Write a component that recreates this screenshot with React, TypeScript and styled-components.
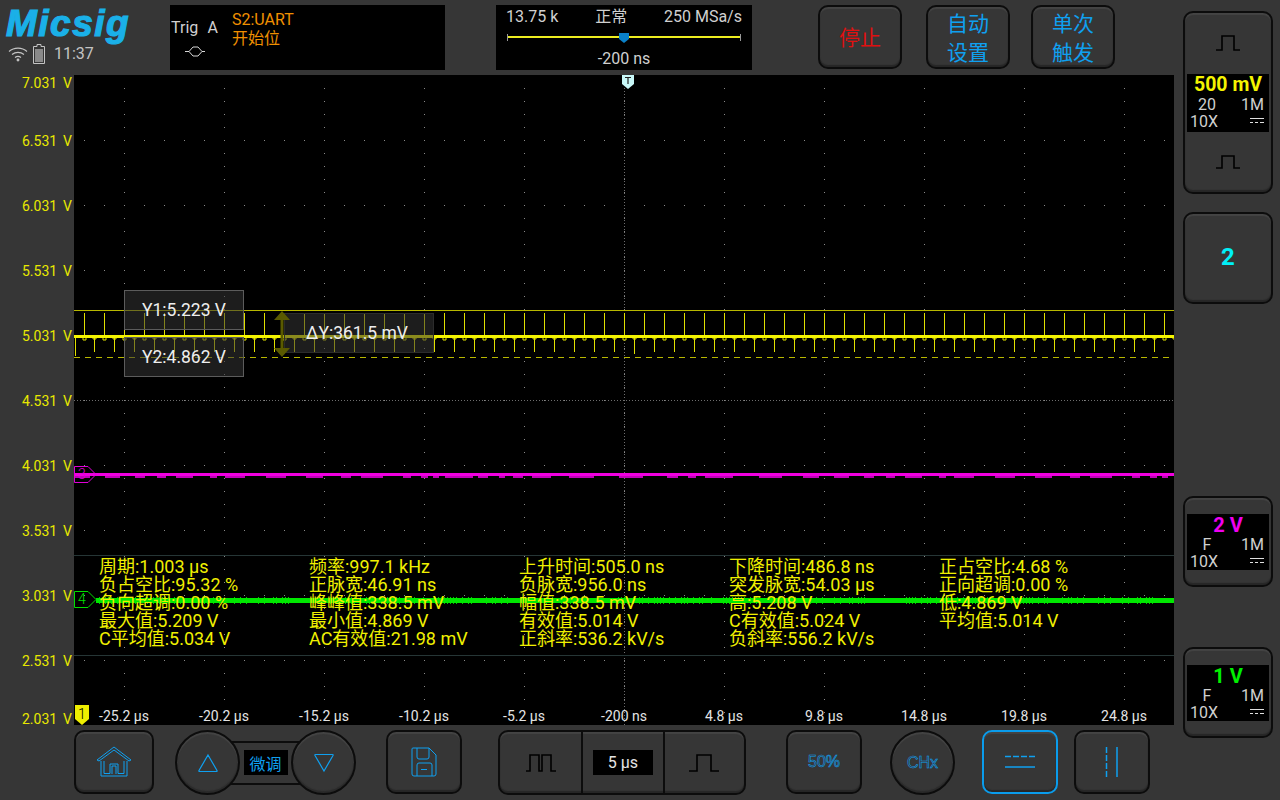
import styled, { createGlobalStyle } from 'styled-components';

const GlobalStyle = createGlobalStyle`
  html, body { margin: 0; padding: 0; background: #363636; }
  body { font-family: Roboto, "Noto Sans CJK SC", sans-serif; overflow: hidden; }
  * { box-sizing: border-box; }
`;

const YELLOW = '#f0f000';
const BLUE = '#0fa0f0';
const DARK = '#0c0c0c';

const voltages = ['7.031', '6.531', '6.031', '5.531', '5.031', '4.531', '4.031', '3.531', '3.031', '2.531', '2.031'];
const times = ['-25.2 µs', '-20.2 µs', '-15.2 µs', '-10.2 µs', '-5.2 µs', '-200 ns', '4.8 µs', '9.8 µs', '14.8 µs', '19.8 µs', '24.8 µs'];
const measures = [
  '周期:1.003 µs', '频率:997.1 kHz', '上升时间:505.0 ns', '下降时间:486.8 ns', '正占空比:4.68 %',
  '负占空比:95.32 %', '正脉宽:46.91 ns', '负脉宽:956.0 ns', '突发脉宽:54.03 µs', '正向超调:0.00 %',
  '负向超调:0.00 %', '峰峰值:338.5 mV', '幅值:338.5 mV', '高:5.208 V', '低:4.869 V',
  '最大值:5.209 V', '最小值:4.869 V', '有效值:5.014 V', 'C有效值:5.024 V', '平均值:5.014 V',
  'C平均值:5.034 V', 'AC有效值:21.98 mV', '正斜率:536.2 kV/s', '负斜率:556.2 kV/s',
];

const range = (n: number) => Array.from({ length: n }, (_, i) => i);

// dots of the graticule, in plot coordinates
const gridPath = () => {
  let d = '';
  range(11).forEach((c) => {
    range(50).forEach((r) => {
      d += `M${50 + c * 100} ${13 + r * 13}h1v1h-1z`;
    });
  });
  range(9).forEach((r) => {
    range(55).forEach((c) => {
      d += `M${10 + c * 20} ${65 + r * 65}h1v1h-1z`;
    });
  });
  return d;
};

const spikesPath = () => {
  let d = '';
  range(55).forEach((i) => {
    const x = 10 + i * 20;
    d += `M${x}.5 261V238`;
    d += `M${x + 10}.5 261V${i === 27 ? 279 : 277}`;
    d += `M${x + 9} 262h3v2h-3z`;
    d += `M${x - 1} 262h3v3h-3z`;
  });
  return d + 'M1.5 261V281';
};

const burstPath = (y: number, seed: number, height: number) => {
  let d = '';
  let x = 0;
  let i = seed;
  while (x < 1100) {
    i = (i * 37 + 11) % 101;
    const w = 6 + (i % 24);
    const gap = 4 + (i % 23);
    d += `M${x} ${y}h${w}v${height}h-${w}z`;
    x += w + gap;
  }
  return d;
};

const noisePath = () => {
  let d = '';
  let i = 7;
  for (let x = 22; x < 1100; x += 3) {
    i = (i * 29 + 13) % 97;
    d += `M${x}.5 ${523 - (i % 2)}V${528 + (i % 2)}`;
  }
  return d;
};

const Screen = styled.div`
  width: 1280px;
  height: 800px;
  display: flex;
  background: #363636;
  overflow: hidden;
`;

const MainColumn = styled.div`
  width: 1174px;
  display: flex;
  flex-direction: column;
`;

const TopBar = styled.header`
  height: 75px;
  padding-top: 5px;
  display: flex;
  align-items: flex-start;
`;

const Brand = styled.div`
  width: 170px;
  flex: none;
`;

const Logo = styled.div`
  font: italic 900 37px/38px "Liberation Sans", sans-serif;
  -webkit-text-stroke: 1.2px #1ab0e8;
  letter-spacing: 1.5px;
  color: #1ab0e8;
  padding-left: 6px;
  height: 36px;
`;

const Status = styled.div`
  display: flex;
  align-items: center;
  gap: 5px;
  padding: 3px 0 0 8px;
  color: #c4c4c4;
  font-size: 16px;
  line-height: 20px;
`;

const Clock = styled.span`
  margin-left: 4px;
`;

const TrigPanel = styled.section`
  width: 275px;
  height: 65px;
  background: #000;
  display: flex;
  flex: none;
`;

const TrigSource = styled.div`
  width: 62px;
  color: #d0d0d0;
  font-size: 16px;
  line-height: 18px;
  padding: 14px 0 0 1px;
`;

const TrigLabels = styled.div`
  display: flex;
  justify-content: space-between;
  padding-right: 14px;
`;

const TrigGlyph = styled.svg`
  display: block;
  margin: 9px 0 0 14px;
`;

const TrigInfo = styled.div`
  color: #f09000;
  font-size: 16px;
  line-height: 19px;
  padding-top: 5px;
`;

const TimePanel = styled.section`
  width: 256px;
  height: 65px;
  margin: 0 66px 0 51px;
  background: #000;
  color: #d0d0d0;
  font-size: 16px;
  flex: none;
  display: flex;
  flex-direction: column;
  align-items: stretch;
`;

const TimeRow = styled.div`
  display: flex;
  justify-content: space-between;
  padding: 3px 10px 0;
  line-height: 18px;
`;

const TimeTrack = styled.div`
  position: relative;
  height: 7px;
  margin: 8px 11px 0;
  border-left: 1px solid #999;
  border-right: 1px solid #999;
  &::before {
    content: '';
    position: absolute;
    left: 0;
    right: 0;
    top: 2px;
    height: 2px;
    background: #ecec20;
  }
`;

const TimeThumb = styled.svg`
  position: absolute;
  left: 111px;
  top: -1px;
`;

const TimeOffset = styled.div`
  text-align: center;
  margin-top: 9px;
  line-height: 18px;
`;

const Key = styled.button<{ $w: number; $h?: number; $ml?: number; $color?: string; $active?: boolean; $pt?: number }>`
  width: ${(p) => p.$w}px;
  height: ${(p) => p.$h ?? 64}px;
  margin-left: ${(p) => p.$ml ?? 0}px;
  flex: none;
  padding: ${(p) => p.$pt ?? 0}px 0 0;
  display: flex;
  flex-direction: column;
  align-items: center;
  justify-content: center;
  background: #363636;
  border: 2px solid ${(p) => (p.$active ? '#0a9cec' : DARK)};
  border-radius: 10px;
  box-shadow: inset 0 -2px 1px #262626, inset 0 2px 1px #444;
  color: ${(p) => p.$color ?? BLUE};
  font: 21px/29px Roboto, "Noto Sans CJK SC", sans-serif;
`;

const Middle = styled.div`
  height: 650px;
  display: flex;
`;

const Axis = styled.div`
  width: 74px;
  flex: none;
`;

const AxisLabel = styled.div`
  height: 65px;
  display: flex;
  align-items: center;
  justify-content: space-between;
  padding: 0 2px 0 22px;
  color: #e8e800;
  font-size: 14px;
  &:first-child {
    height: 33px;
    align-items: flex-start;
  }
  &:last-child {
    height: 34px;
    align-items: flex-end;
  }
`;

const Plot = styled.main`
  position: relative;
  width: 1100px;
  height: 650px;
  background: #000;
  overflow: hidden;
`;

const Trace = styled.svg`
  display: block;
`;

const Readout = styled.div<{ $x: number; $y: number; $w: number }>`
  position: absolute;
  left: ${(p) => p.$x}px;
  top: ${(p) => p.$y}px;
  width: ${(p) => p.$w}px;
  height: 40px;
  display: flex;
  align-items: center;
  justify-content: center;
  background: rgba(52, 52, 52, 0.55);
  border: 1px solid #5c5c5c;
  color: #eee;
  font-size: 17.5px;
`;

const DeltaReadout = styled(Readout)`
  border-color: #2c2c2c;
  padding-right: 4px;
`;

const DeltaArrow = styled.svg`
  position: absolute;
  left: 200px;
  top: 235px;
`;

const MeasureTable = styled.div`
  position: absolute;
  left: 0;
  right: 0;
  top: 480px;
  height: 101px;
  padding: 2px 0 0 25px;
  border-top: 1px solid #263636;
  border-bottom: 1px solid #263636;
  display: grid;
  grid-template-columns: repeat(5, 210px);
  grid-auto-rows: 18px;
  color: ${YELLOW};
  font-size: 18px;
  line-height: 18px;
  white-space: nowrap;
`;

const TimeScale = styled.div`
  position: absolute;
  left: 0;
  bottom: 0;
  display: grid;
  grid-template-columns: repeat(11, 100px);
  color: #e4e4e4;
  font-size: 14px;
  line-height: 18px;
  text-align: center;
`;

const Marker = styled.svg<{ $x: number; $y: number }>`
  position: absolute;
  left: ${(p) => p.$x}px;
  top: ${(p) => p.$y}px;
`;

const MarkerLabel = styled.span<{ $x: number; $y: number; $color: string }>`
  position: absolute;
  left: ${(p) => p.$x}px;
  top: ${(p) => p.$y}px;
  color: ${(p) => p.$color};
  font-size: 14px;
  line-height: 16px;
  font-weight: 300;
`;

const BottomBar = styled.footer`
  height: 75px;
  padding: 5px 0 0 74px;
  display: flex;
  align-items: flex-start;
`;

const Stepper = styled.div`
  width: 181px;
  height: 65px;
  margin-left: 21px;
  display: flex;
  align-items: center;
  flex: none;
`;

const RoundKey = styled.button<{ $ml?: number }>`
  position: relative;
  z-index: 1;
  width: 65px;
  height: 65px;
  flex: none;
  margin-left: ${(p) => p.$ml ?? 0}px;
  padding: 0;
  display: flex;
  align-items: center;
  justify-content: center;
  border-radius: 50%;
  background: #363636;
  border: 2px solid ${DARK};
  box-shadow: inset 0 -2px 1px #2a2a2a, inset 0 2px 1px #444;
`;

const StepStrip = styled.div`
  flex: 1;
  height: 44px;
  margin: 0 -12px;
  display: flex;
  align-items: center;
  justify-content: center;
  background: #363636;
  border: 2px solid ${DARK};
`;

const Badge = styled.div<{ $w: number; $color: string }>`
  width: ${(p) => p.$w}px;
  height: 25px;
  background: #000;
  color: ${(p) => p.$color};
  display: flex;
  align-items: center;
  justify-content: center;
  font-size: 16px;
`;

const Segmented = styled.div`
  width: 248px;
  height: 65px;
  margin-left: 36px;
  flex: none;
  display: grid;
  grid-template-columns: repeat(3, 1fr);
  background: #363636;
  border: 2px solid ${DARK};
  border-radius: 10px;
  box-shadow: inset 0 -2px 1px #262626, inset 0 2px 1px #444;
`;

const Segment = styled.div`
  display: flex;
  align-items: center;
  justify-content: center;
  & + & {
    border-left: 2px solid ${DARK};
  }
`;

const OutlineText = styled.span`
  font: 400 16px "Liberation Sans", sans-serif;
  color: transparent;
  -webkit-text-stroke: 0.55px ${BLUE};
`;

const SideColumn = styled.aside`
  width: 106px;
  padding: 11px 0 0 9px;
  display: flex;
  flex-direction: column;
`;

const ChannelCard = styled.div<{ $h: number; $mt?: number }>`
  width: 90px;
  height: ${(p) => p.$h}px;
  margin-top: ${(p) => p.$mt ?? 0}px;
  flex: none;
  display: flex;
  flex-direction: column;
  align-items: stretch;
  justify-content: center;
  background: #363636;
  border: 2px solid ${DARK};
  border-radius: 10px;
  box-shadow: inset 0 -2px 1px #262626, inset 0 2px 1px #444;
`;

const CardPulse = styled.div`
  flex: 1;
  display: flex;
  align-items: center;
  justify-content: center;
`;

const Display = styled.div<{ $h: number }>`
  height: ${(p) => p.$h}px;
  margin: 0 2px;
  background: #000;
  color: #d0d0d0;
  font-size: 16px;
  line-height: 17px;
  display: flex;
  flex-direction: column;
  flex: none;
`;

const Volts = styled.div<{ $color: string; $size: number }>`
  color: ${(p) => p.$color};
  font-weight: 700;
  font-size: ${(p) => p.$size}px;
  line-height: 22px;
  text-align: center;
`;

const DisplayRow = styled.div`
  display: flex;
  justify-content: space-between;
  align-items: center;
  padding: 0 5px 0 3px;
  height: 17px;
`;

const Indent = styled.span`
  width: 34px;
  text-align: center;
`;

const ChannelNumber = styled.div`
  color: #00f0f8;
  font-size: 24px;
  font-weight: 700;
  text-align: center;
  padding-bottom: 3px;
`;

const Pulse = ({ w = 24, h = 16, top = 6, bottom = 18 }: { w?: number; h?: number; top?: number; bottom?: number }) => (
  <svg width={w} height={h} viewBox={`0 0 ${w} ${h}`} fill="none" stroke="#000" strokeWidth="1.6">
    <path d={`M0 ${h - 1}H${top}V1H${bottom}V${h - 1}H${w}`} />
  </svg>
);

const DcGlyph = () => (
  <svg width="14" height="6" viewBox="0 0 14 6" stroke="#e0e0e0" strokeWidth="1">
    <path d="M0 .5H14M0 4.5H3M5 4.5H8M10 4.5H14" />
  </svg>
);

const ChannelDisplay = ({ volts, color, bw }: { volts: string; color: string; bw: string }) => (
  <Display $h={56}>
    <Volts $color={color} $size={20}>{volts}</Volts>
    <DisplayRow>
      <Indent>{bw}</Indent>
      <span>1M</span>
    </DisplayRow>
    <DisplayRow>
      <span>10X</span>
      <DcGlyph />
    </DisplayRow>
  </Display>
);

const App = () => (
  <>
    <GlobalStyle />
    <Screen>
      <MainColumn>
        <TopBar>
          <Brand>
            <Logo>Micsig</Logo>
            <Status>
              <svg width="20" height="16" viewBox="0 0 20 16" fill="none" stroke="#c4c4c4" strokeWidth="1.1">
                <path d="M1 5.5C6 1 14 1 19 5.5M4 8.5C7.5 5.6 12.5 5.6 16 8.5M7 11.5C8.8 10.2 11.2 10.2 13 11.5" />
                <circle cx="10" cy="14" r="0.9" fill="#c4c4c4" />
              </svg>
              <svg width="12" height="20" viewBox="0 0 12 20">
                <path d="M4 .5h4v2h3.5v17H.5v-17H4z" fill="none" stroke="#c4c4c4" />
                <rect x="2" y="5" width="8" height="13" fill="#8a8a8a" />
              </svg>
              <Clock>11:37</Clock>
            </Status>
          </Brand>
          <TrigPanel>
            <TrigSource>
              <TrigLabels>
                <span>Trig</span>
                <span>A</span>
              </TrigLabels>
              <TrigGlyph width="20" height="11" viewBox="0 0 20 11" fill="none" stroke="#eee" strokeWidth="0.9">
                <path d="M0 5.5H4L8 1H13L17 5.5H20M4 5.5L8 10H13L17 5.5" />
              </TrigGlyph>
            </TrigSource>
            <TrigInfo>
              <div>S2:UART</div>
              <div>开始位</div>
            </TrigInfo>
          </TrigPanel>
          <TimePanel>
            <TimeRow>
              <span>13.75 k</span>
              <span>正常</span>
              <span>250 MSa/s</span>
            </TimeRow>
            <TimeTrack>
              <TimeThumb width="10" height="10" viewBox="0 0 10 10">
                <path d="M0 0H10V6L5 10L0 6Z" fill="#0a80c8" />
              </TimeThumb>
            </TimeTrack>
            <TimeOffset>-200 ns</TimeOffset>
          </TimePanel>
          <Key $w={84} $color="#e01010" $pt={2}>停止</Key>
          <Key $w={84} $ml={24} $pt={3}>
            <span>自动</span>
            <span>设置</span>
          </Key>
          <Key $w={84} $ml={21} $pt={3}>
            <span>单次</span>
            <span>触发</span>
          </Key>
        </TopBar>
        <Middle>
          <Axis>
            {voltages.map((v) => (
              <AxisLabel key={v}>
                <span>{v}</span>
                <span>V</span>
              </AxisLabel>
            ))}
          </Axis>
          <Plot>
            <Trace width="1100" height="650" viewBox="0 0 1100 650">
              <path d={gridPath()} fill="#8a8a8a" />
              <path d="M550.5 13V650" stroke="#6e6e6e" strokeDasharray="1 2" />
              <path d="M0 325.5H1100" stroke="#6e6e6e" strokeDasharray="1 2" />
              <path d="M0 235.5H1100" stroke="#b8b800" />
              <path d="M0 282.5H1100" stroke="#b8b800" strokeDasharray="6 5" />
              <path d={spikesPath()} stroke="#e0e000" strokeWidth="1" fill="none" />
              <path d="M0 261.5H1100" stroke="#f4f400" strokeWidth="3" />
              <path d="M0 399.5H1100" stroke="#f000e0" strokeWidth="3" />
              <path d={burstPath(401, 17, 2)} fill="#c000b8" />
              <path d={noisePath()} stroke="#00c800" strokeWidth="1" />
              <path d="M22 525.5H1100" stroke="#00e800" strokeWidth="5" />
            </Trace>
            <Readout $x={50} $y={215} $w={120}>Y1:5.223 V</Readout>
            <Readout $x={50} $y={262} $w={120}>Y2:4.862 V</Readout>
            <DeltaReadout $x={210} $y={238} $w={150}>ΔY:361.5 mV</DeltaReadout>
            <DeltaArrow width="16" height="48" viewBox="0 0 16 48" fill="#5a5a00">
              <path d="M8 1L16 10H9.5V38H16L8 47L0 38H6.5V10H0Z" />
            </DeltaArrow>
            <MeasureTable>
              {measures.map((m) => (
                <span key={m}>{m}</span>
              ))}
            </MeasureTable>
            <TimeScale>
              {times.map((t) => (
                <span key={t}>{t}</span>
              ))}
            </TimeScale>
            <Marker $x={548} $y={0} width="12" height="14" viewBox="0 0 12 14">
              <path d="M0 0H12V9L6 14L0 9Z" fill="#c8f8f8" />
              <path d="M3 2.5H9M6 2.5V9" stroke="#222" strokeWidth="1.2" />
            </Marker>
            <Marker $x={0} $y={391} width="24" height="17" viewBox="0 0 24 17" fill="none">
              <path d="M.5 .5H14L22 8.5L14 16.5H.5Z" stroke="#e000d8" />
            </Marker>
            <MarkerLabel $x={4} $y={391} $color="#e000d8">3</MarkerLabel>
            <Marker $x={0} $y={516} width="24" height="17" viewBox="0 0 24 17" fill="none">
              <path d="M.5 .5H14L22 8.5L14 16.5H.5Z" stroke="#00e000" />
            </Marker>
            <MarkerLabel $x={4} $y={516} $color="#00e000">4</MarkerLabel>
            <Marker $x={1} $y={630} width="14" height="20" viewBox="0 0 14 20">
              <path d="M0 0H14V14L7 20L0 14Z" fill="#eeee00" />
            </Marker>
            <MarkerLabel $x={4} $y={631} $color="#000">1</MarkerLabel>
          </Plot>
        </Middle>
        <BottomBar>
          <Key $w={80}>
            <svg width="36" height="32" viewBox="0 0 36 32" fill="none" stroke={BLUE} strokeWidth="1">
              <path d="M1 14L18 1L35 14L33 15L18 4L3 15Z" />
              <path d="M5 15V30H31V15M8 15V27.5H14V18H22V27.5H28V15M16 28V20H20V28" />
            </svg>
          </Key>
          <Stepper>
            <RoundKey>
              <svg width="22" height="20" viewBox="0 0 22 20" fill="none" stroke={BLUE} strokeWidth="1.2">
                <path d="M11 2L20 17.5Q20.5 18.5 19 18.5H3Q1.5 18.5 2 17.5Z" />
              </svg>
            </RoundKey>
            <StepStrip>
              <Badge $w={44} $color={BLUE}>微调</Badge>
            </StepStrip>
            <RoundKey>
              <svg width="22" height="20" viewBox="0 0 22 20" fill="none" stroke={BLUE} strokeWidth="1.2">
                <path d="M11 18L20 2.5Q20.5 1.5 19 1.5H3Q1.5 1.5 2 2.5Z" />
              </svg>
            </RoundKey>
          </Stepper>
          <Key $w={76} $ml={30}>
            <svg width="26" height="30" viewBox="0 0 26 30" fill="none" stroke={BLUE} strokeWidth="1">
              <path d="M2 1H18L25 8V27Q25 29 23 29H3Q1 29 1 27V2Q1 1 2 1Z" />
              <path d="M6 1V10Q6 12 8 12H16Q18 12 18 10V1M6 29V18Q6 16 8 16H19Q21 16 21 18V29M10 22.5H16" />
            </svg>
          </Key>
          <Segmented>
            <Segment>
              <svg width="30" height="18" viewBox="0 0 30 18" fill="none" stroke="#000" strokeWidth="1.6">
                <path d="M0 17H4V1H13V17H16V1H25V17H30" />
              </svg>
            </Segment>
            <Segment>
              <Badge $w={60} $color="#e4e4e4">5 µs</Badge>
            </Segment>
            <Segment>
              <Pulse w={30} h={18} top={8} bottom={22} />
            </Segment>
          </Segmented>
          <Key $w={76} $ml={40}>
            <OutlineText>50%</OutlineText>
          </Key>
          <RoundKey $ml={28}>
            <OutlineText>CHx</OutlineText>
          </RoundKey>
          <Key $w={76} $ml={27} $active>
            <svg width="30" height="14" viewBox="0 0 30 14" fill="none" stroke={BLUE} strokeWidth="1.5">
              <path d="M0 1.5H6M8 1.5H14M16 1.5H22M24 1.5H30M0 12H30" />
            </svg>
          </Key>
          <Key $w={76} $ml={16}>
            <svg width="14" height="30" viewBox="0 0 14 30" fill="none" stroke={BLUE} strokeWidth="1.5">
              <path d="M1.5 0V6M1.5 8V14M1.5 16V22M1.5 24V30M12 0V30" />
            </svg>
          </Key>
        </BottomBar>
      </MainColumn>
      <SideColumn>
        <ChannelCard $h={183}>
          <CardPulse>
            <Pulse />
          </CardPulse>
          <Display $h={58}>
            <Volts $color="#f4f400" $size={19.5}>500 mV</Volts>
            <DisplayRow>
              <Indent>20</Indent>
              <span>1M</span>
            </DisplayRow>
            <DisplayRow>
              <span>10X</span>
              <DcGlyph />
            </DisplayRow>
          </Display>
          <CardPulse>
            <Pulse h={14} />
          </CardPulse>
        </ChannelCard>
        <ChannelCard $h={92} $mt={18}>
          <ChannelNumber>2</ChannelNumber>
        </ChannelCard>
        <ChannelCard $h={91} $mt={192}>
          <ChannelDisplay volts="2 V" color="#f000f0" bw="F" />
        </ChannelCard>
        <ChannelCard $h={91} $mt={60}>
          <ChannelDisplay volts="1 V" color="#00f000" bw="F" />
        </ChannelCard>
      </SideColumn>
    </Screen>
  </>
);

export default App;
